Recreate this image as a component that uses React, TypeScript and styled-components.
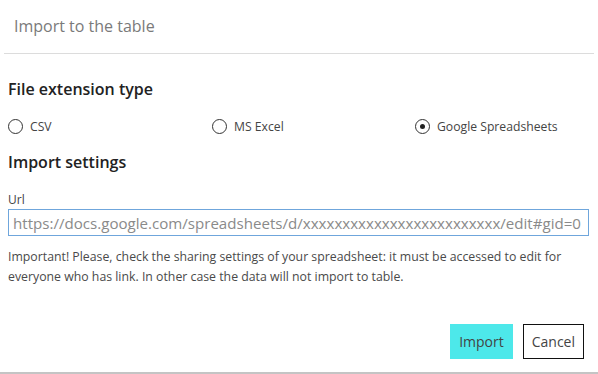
import React, { useState } from 'react';
import styled, { createGlobalStyle } from 'styled-components';

const GlobalStyle = createGlobalStyle`
  html, body {
    margin: 0;
    padding: 0;
    background: #fff;
  }
  body {
    font-family: 'Open Sans', 'Noto Sans', sans-serif;
  }
`;

const Dialog = styled.div`
  width: 598px;
  height: 374px;
  box-sizing: border-box;
  border-bottom: 2px solid #c4c4c4;
  display: flex;
  flex-direction: column;
`;

const Header = styled.div`
  height: 54px;
  margin: 0 4px;
  box-sizing: border-box;
  border-bottom: 1px solid #dcdcdc;
  display: flex;
  align-items: center;
  padding: 0 10px 2px;
`;

const Title = styled.h2`
  margin: 0;
  font-size: 16px;
  font-weight: 400;
  color: #7a7a7a;
`;

const Body = styled.div`
  padding: 0 8px;
  display: flex;
  flex-direction: column;
`;

const SectionTitle = styled.h3<{ $top: number }>`
  margin: ${(p) => p.$top}px 0 0;
  font-size: 16px;
  line-height: 20px;
  font-weight: 600;
  color: #222;
`;

const RadioRow = styled.div`
  margin-top: 17px;
  display: grid;
  grid-template-columns: 204px 203px 1fr;
  height: 20px;
`;

const RadioLabel = styled.label`
  display: flex;
  align-items: center;
  gap: 7px;
  font-size: 12.2px;
  color: #444;
  cursor: pointer;
`;

const Circle = styled.span<{ $checked: boolean }>`
  width: 15px;
  height: 15px;
  box-sizing: border-box;
  border: 1px solid #333;
  border-radius: 50%;
  display: flex;
  align-items: center;
  justify-content: center;

  &::after {
    content: '';
    width: 5px;
    height: 5px;
    border-radius: 50%;
    background: #222;
    display: ${(p) => (p.$checked ? 'block' : 'none')};
  }
`;

const FieldLabel = styled.div`
  margin-top: 20px;
  font-size: 12px;
  line-height: 16px;
  color: #444;
`;

const UrlInput = styled.input`
  margin-top: 1px;
  width: 581px;
  height: 27px;
  box-sizing: border-box;
  border: 1px solid #6fa6dc;
  padding: 0 4px;
  font-family: inherit;
  font-size: 15.1px;
  color: #333;
  outline: none;

  &::placeholder {
    color: #8a8a8a;
  }
`;

const Note = styled.p`
  margin: 11px 0 0;
  max-width: 570px;
  font-size: 12.3px;
  line-height: 20px;
  color: #4a4a4a;
`;

const Footer = styled.div`
  margin-top: 37px;
  padding-right: 6px;
  display: flex;
  justify-content: flex-end;
  gap: 10px;
`;

const Button = styled.button<{ $primary?: boolean }>`
  height: 35px;
  box-sizing: border-box;
  padding: 0 8px;
  font-family: inherit;
  font-size: 14px;
  color: #444;
  cursor: pointer;
  background: ${(p) => (p.$primary ? '#4de8ea' : '#fff')};
  border: 1px solid ${(p) => (p.$primary ? '#4de8ea' : '#111')};
`;

const options = ['CSV', 'MS Excel', 'Google Spreadsheets'];

const App: React.FC = () => {
    const [type, setType] = useState('Google Spreadsheets');

    return (
        <>
            <GlobalStyle />
            <Dialog>
                <Header>
                    <Title>Import to the table</Title>
                </Header>
                <Body>
                    <SectionTitle $top={25}>File extension type</SectionTitle>
                    <RadioRow>
                        {options.map((option) => (
                            <RadioLabel key={option} onClick={() => setType(option)}>
                                <Circle $checked={type === option} />
                                {option}
                            </RadioLabel>
                        ))}
                    </RadioRow>
                    <SectionTitle $top={16}>Import settings</SectionTitle>
                    <FieldLabel>Url</FieldLabel>
                    <UrlInput placeholder="https://docs.google.com/spreadsheets/d/xxxxxxxxxxxxxxxxxxxxxxxxx/edit#gid=0" />
                    <Note>
                        Important! Please, check the sharing settings of your spreadsheet: it must be accessed to edit for
                        everyone who has link. In other case the data will not import to table.
                    </Note>
                    <Footer>
                        <Button $primary>Import</Button>
                        <Button>Cancel</Button>
                    </Footer>
                </Body>
            </Dialog>
        </>
    );
};

export default App;
